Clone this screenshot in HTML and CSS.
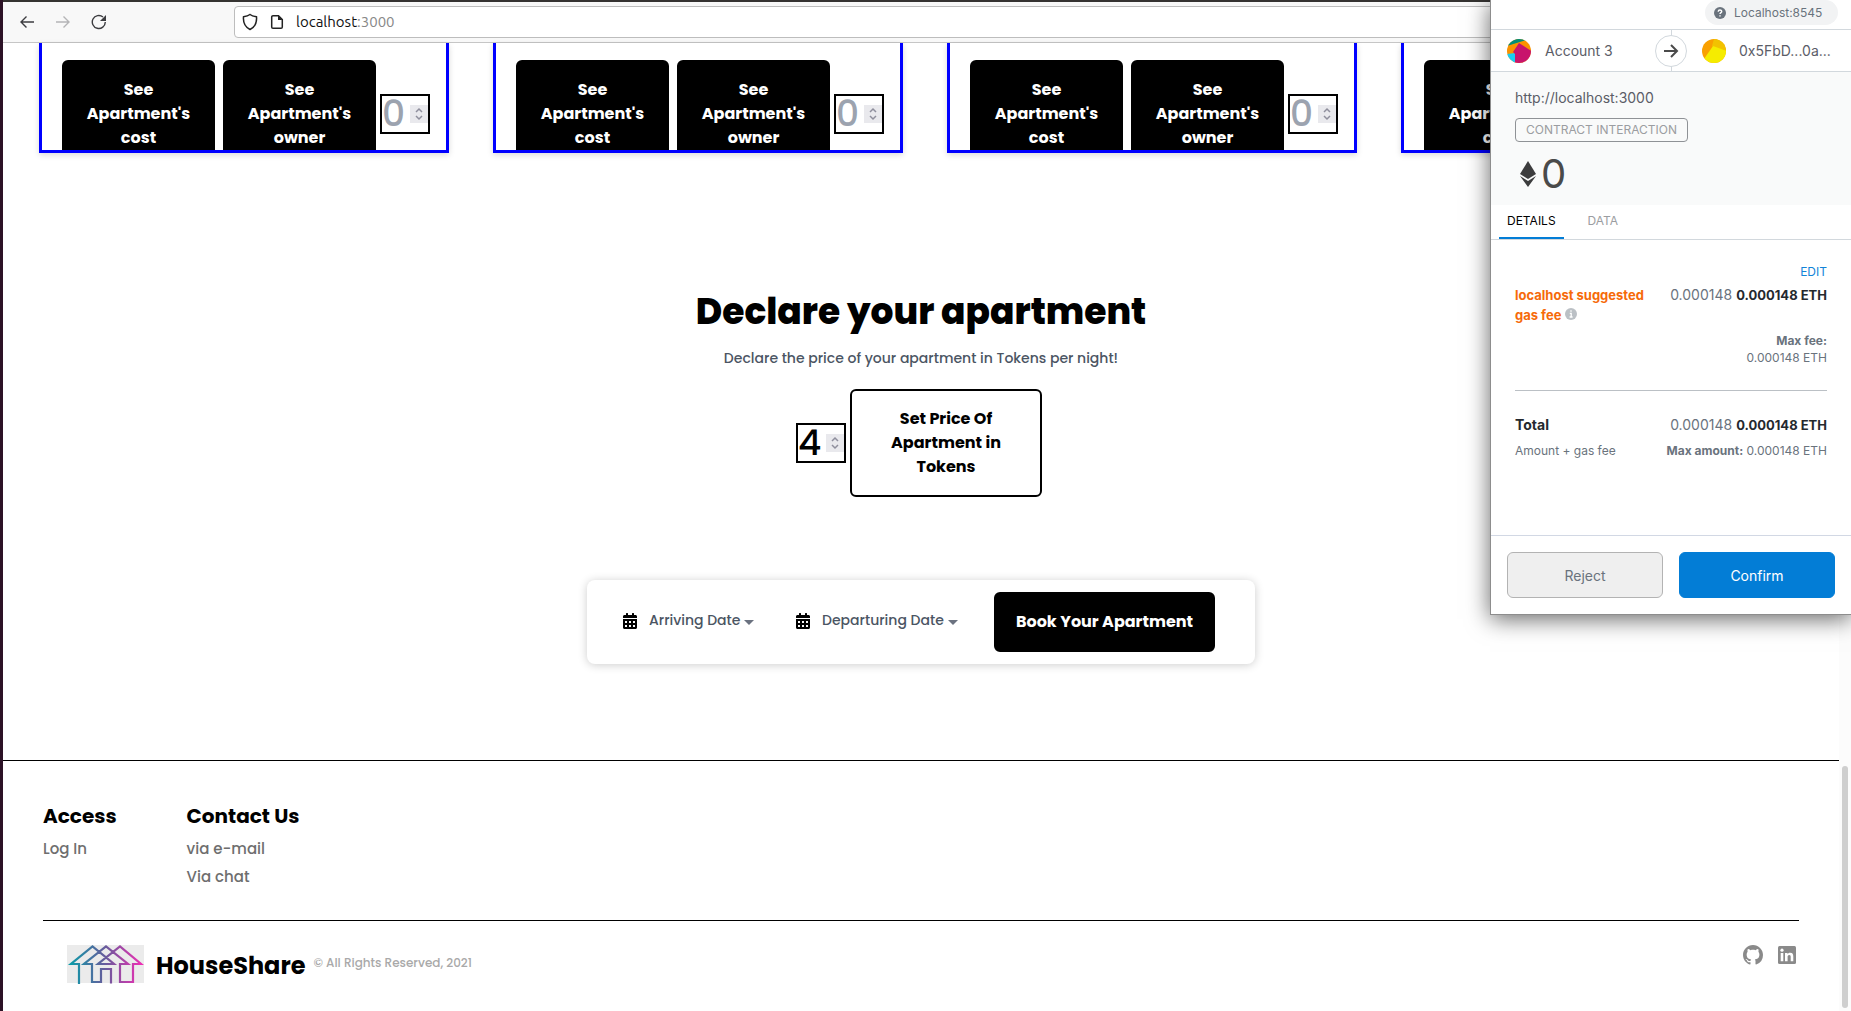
FILE: index.html
```html
<!DOCTYPE html>
<html lang="en">
<head>
<meta charset="utf-8">
<meta name="viewport" content="width=device-width, initial-scale=1">
<title>HouseShare</title>
<link rel="stylesheet" href="styles.css">
</head>
<body>
<svg class="defs" width="0" height="0" aria-hidden="true">
  <symbol id="spin" viewBox="0 0 18 18"><path d="M6 7l3-3 3 3M6 11l3 3 3-3" fill="none" stroke="#8f8f9d" stroke-width="1.5"/></symbol>
  <symbol id="calendar" viewBox="0 0 448 512"><path d="M0 464c0 26.500 21.500 48 48 48h352c26.500 0 48-21.500 48-48V192H0v272zm320-196c0-6.600 5.400-12 12-12h40c6.600 0 12 5.400 12 12v40c0 6.600-5.400 12-12 12h-40c-6.600 0-12-5.400-12-12v-40zm0 128c0-6.600 5.400-12 12-12h40c6.600 0 12 5.400 12 12v40c0 6.600-5.400 12-12 12h-40c-6.600 0-12-5.400-12-12v-40zM192 268c0-6.600 5.400-12 12-12h40c6.600 0 12 5.400 12 12v40c0 6.600-5.400 12-12 12h-40c-6.600 0-12-5.400-12-12v-40zm0 128c0-6.600 5.400-12 12-12h40c6.600 0 12 5.400 12 12v40c0 6.600-5.400 12-12 12h-40c-6.600 0-12-5.400-12-12v-40zM64 268c0-6.600 5.400-12 12-12h40c6.600 0 12 5.400 12 12v40c0 6.600-5.400 12-12 12H76c-6.600 0-12-5.400-12-12v-40zm0 128c0-6.600 5.400-12 12-12h40c6.600 0 12 5.400 12 12v40c0 6.600-5.400 12-12 12H76c-6.600 0-12-5.400-12-12v-40zM400 64h-48V16c0-8.800-7.200-16-16-16h-32c-8.800 0-16 7.200-16 16v48H160V16c0-8.800-7.200-16-16-16h-32c-8.800 0-16 7.200-16 16v48H48C21.500 64 0 85.500 0 112v48h448v-48c0-26.500-21.500-48-48-48z"/></symbol>
</svg>

<header class="toolbar">
  <div class="nav">
    <button class="nav-btn" aria-label="Back"><svg width="16" height="16" viewBox="0 0 16 16"><path d="M15 8H2M7.500 2.500L2 8l5.500 5.500" fill="none" stroke="#3c3c40" stroke-width="1.400"/></svg></button>
    <button class="nav-btn" aria-label="Forward" disabled><svg width="16" height="16" viewBox="0 0 16 16"><path d="M1 8h13M8.500 2.500L14 8l-5.500 5.500" fill="none" stroke="#b4b4b6" stroke-width="1.400"/></svg></button>
    <button class="nav-btn" aria-label="Reload"><svg width="16" height="16" viewBox="0 0 16 16"><path d="M14.300 8A6.500 6.500 0 1 1 12 3" fill="none" stroke="#3c3c40" stroke-width="1.400"/><path d="M15 1v6H9z" fill="#3c3c40"/></svg></button>
  </div>
  <div class="url">
    <svg width="16" height="18" viewBox="0 0 16 18"><path d="M8 1.500C10 3 12.500 3.500 14.500 3.800 15 9.500 13 14 8 16.500 3 14 1 9.500 1.500 3.800 3.500 3.500 6 3 8 1.500z" fill="none" stroke="#222" stroke-width="1.500"/></svg>
    <svg width="14" height="16" viewBox="0 0 14 16"><path d="M3 1.700h5.500L12.300 5.500V13a1.300 1.300 0 0 1-1.300 1.300H3A1.300 1.300 0 0 1 1.700 13V3A1.300 1.300 0 0 1 3 1.700z" fill="none" stroke="#222" stroke-width="1.500"/><path d="M8 1.500V6h4.500z" fill="#222"/></svg>
    <span class="address">localhost<span class="port">:3000</span></span>
  </div>
</header>

<main class="page">
  <section class="cards">
    <article class="card">
      <button class="btn btn-dark btn-card">See Apartment's cost</button>
      <button class="btn btn-dark btn-card">See Apartment's owner</button>
      <span class="number"><input type="number" placeholder="0" aria-label="Apartment 1"><svg class="spin"><use href="#spin"/></svg></span>
    </article>
    <article class="card">
      <button class="btn btn-dark btn-card">See Apartment's cost</button>
      <button class="btn btn-dark btn-card">See Apartment's owner</button>
      <span class="number"><input type="number" placeholder="0" aria-label="Apartment 2"><svg class="spin"><use href="#spin"/></svg></span>
    </article>
    <article class="card">
      <button class="btn btn-dark btn-card">See Apartment's cost</button>
      <button class="btn btn-dark btn-card">See Apartment's owner</button>
      <span class="number"><input type="number" placeholder="0" aria-label="Apartment 3"><svg class="spin"><use href="#spin"/></svg></span>
    </article>
    <article class="card">
      <button class="btn btn-dark btn-card">See Apartment's cost</button>
      <button class="btn btn-dark btn-card">See Apartment's owner</button>
      <span class="number"><input type="number" placeholder="0" aria-label="Apartment 4"><svg class="spin"><use href="#spin"/></svg></span>
    </article>
  </section>

  <section class="declare">
    <h1>Declare your apartment</h1>
    <p>Declare the price of your apartment in Tokens per night!</p>
    <div class="price">
      <span class="number"><input type="number" value="4" aria-label="Price in tokens"><svg class="spin"><use href="#spin"/></svg></span>
      <button class="btn btn-line">Set Price Of Apartment in Tokens</button>
    </div>
  </section>

  <section class="booking">
    <button class="date date-arrive"><svg width="14" height="16"><use href="#calendar"/></svg><span>Arriving Date</span><i class="caret"></i></button>
    <button class="date date-depart"><svg width="14" height="16"><use href="#calendar"/></svg><span>Departuring Date</span><i class="caret"></i></button>
    <button class="btn btn-dark btn-book">Book Your Apartment</button>
  </section>

  <footer class="footer">
    <div class="links">
      <div class="link-col">
        <h2>Access</h2>
        <a href="#">Log In</a>
      </div>
      <div class="link-col">
        <h2>Contact Us</h2>
        <a href="#">via e-mail</a>
        <a href="#">Via chat</a>
      </div>
    </div>
    <div class="legal">
      <svg class="logo" width="77" height="39" viewBox="0 0 77 39" aria-hidden="true">
        <defs><linearGradient id="roof" gradientUnits="userSpaceOnUse" x1="3" y1="0" x2="75" y2="0"><stop offset="0" stop-color="#0c9ba8"/><stop offset=".5" stop-color="#6a5a9c"/><stop offset="1" stop-color="#ee2fb4"/></linearGradient></defs>
        <rect width="77" height="38" fill="#ebebeb"/>
        <g fill="none" stroke="url(#roof)" stroke-width="2.200">
          <path d="M12 39V19H4L25.500 1.500 47 19H31L53 1.500 74 19H66V37H53V19H61L39 1.500 17 19H25V37H34V24H44V38.500"/>
        </g>
      </svg>
      <strong class="brand">HouseShare</strong>
      <small class="copy">© All Rights Reserved, 2021</small>
      <div class="social">
        <a href="#" aria-label="GitHub"><svg width="20" height="20" viewBox="0 0 16 16" fill="#8a8a8a"><path d="M8 0C3.580 0 0 3.580 0 8c0 3.540 2.290 6.530 5.470 7.590.4.070.55-.17.55-.38 0-.19-.01-.82-.01-1.490-2.010.37-2.530-.49-2.690-.94-.09-.23-.48-.94-.82-1.130-.28-.15-.68-.52-.01-.53.63-.01 1.080.58 1.230.82.72 1.210 1.870.87 2.330.66.07-.52.28-.87.51-1.070-1.780-.2-3.640-.89-3.640-3.950 0-.87.31-1.590.82-2.150-.08-.2-.36-1.020.08-2.120 0 0 .67-.21 2.200.82.64-.18 1.320-.27 2-.27s1.360.09 2 .27c1.530-1.040 2.200-.82 2.200-.82.44 1.100.16 1.920.08 2.120.51.56.82 1.270.82 2.150 0 3.070-1.870 3.750-3.650 3.950.29.25.54.73.54 1.480 0 1.070-.01 1.930-.01 2.200 0 .21.15.46.55.38A8.010 8.010 0 0 0 16 8c0-4.420-3.580-8-8-8z"/></svg></a>
        <a href="#" aria-label="LinkedIn"><svg width="18" height="18" viewBox="0 0 18 18"><rect width="18" height="18" rx="1.500" fill="#8a8a8a"/><g fill="#fff"><circle cx="4" cy="4.200" r="1.600"/><path d="M2.700 7h2.600v8.300H2.700zM7 7h2.500v1.200c.5-.8 1.400-1.400 2.700-1.400 2.500 0 3.100 1.600 3.100 3.900v4.600h-2.600v-4.200c0-1.100-.2-2-1.500-2s-1.600 1-1.600 2v4.200H7z"/></g></svg></a>
      </div>
    </div>
  </footer>
</main>
<div class="scrollbar"><div class="thumb"></div></div>

<aside class="wallet">
  <div class="network"><span class="pill"><svg width="12" height="12" viewBox="0 0 12 12"><circle cx="6" cy="6" r="6" fill="#6a737d"/><path d="M4.200 4.700C4.200 2.500 7.700 2.600 7.700 4.500 7.700 5.700 6 5.600 6 7M6 8.200v1.400" fill="none" stroke="#fff" stroke-width="1.400"/></svg>Localhost:8545</span></div>
  <div class="accounts">
    <div class="account">
      <svg width="24" height="24" viewBox="0 0 24 24"><clipPath id="c"><circle cx="12" cy="12" r="12"/></clipPath><g clip-path="url(#c)"><rect width="24" height="24" fill="#fa9300"/><path d="M0 0h24L16 2 0 7z" fill="#018e77"/><path d="M0 15l8-1v10H0z" fill="#18cdf2"/><path d="M12 4l14 9v14H8V15L6 13z" fill="#c8146c"/></g></svg>
      <span>Account 3</span>
    </div>
    <div class="arrow"><svg width="16" height="14" viewBox="0 0 16 14"><path d="M1 7h13M8 1l6 6-6 6" fill="none" stroke="#4a4a4a" stroke-width="2"/></svg></div>
    <div class="account account-to">
      <svg width="24" height="24" viewBox="0 0 24 24"><g clip-path="url(#c)"><rect width="24" height="24" fill="#f9a000"/><path d="M12 0h12v13L10 7z" fill="#f2c200"/><path d="M11 7l14 5v12H4l-2-4z" fill="#f5ec00"/></g></svg>
      <span>0x5FbD...0a...</span>
    </div>
  </div>
  <div class="summary">
    <span class="origin">http://localhost:3000</span>
    <span class="action">CONTRACT INTERACTION</span>
    <div class="amount"><svg width="16" height="26" viewBox="0 0 16 26"><path d="M8 0l8 13-8 5-8-5z" fill="#3c3c3d"/><path d="M0 15l8 5 8-5-8 11z" fill="#3c3c3d"/></svg><span>0</span></div>
  </div>
  <div class="tabs" role="tablist"><button class="tab tab-on" role="tab" aria-selected="true">DETAILS</button><button class="tab" role="tab" aria-selected="false">DATA</button></div>
  <div class="fees">
    <a class="edit" href="#">EDIT</a>
    <div class="fee">
      <span class="gas">localhost suggested<br>gas fee <svg width="12" height="12" viewBox="0 0 12 12"><circle cx="6" cy="6" r="6" fill="#bbc0c5"/><path d="M6 2.300v1.500M4.800 5.300H6.200V9M4.600 9h3" fill="none" stroke="#fff" stroke-width="1.300"/></svg></span>
      <span class="value">0.000148 <b>0.000148 ETH</b></span>
    </div>
    <div class="max"><b>Max fee:</b><br>0.000148 ETH</div>
    <div class="fee total"><b class="sum">Total</b><span class="value">0.000148 <b>0.000148 ETH</b></span></div>
    <div class="fee note"><span>Amount + gas fee</span><span><b>Max amount:</b> 0.000148 ETH</span></div>
  </div>
  <div class="actions"><button class="act reject">Reject</button><button class="act confirm">Confirm</button></div>
</aside>
</body>
</html>
```

FILE: styles.css
```css
* { box-sizing: border-box; }
body {
  margin: 0;
  min-height: 100vh;
  display: grid;
  grid-template: auto 1fr / 1fr 12px;
  border-left: 3px solid #2c1226;
  background: #fff;
  color: #000;
  font-family: Poppins, Inter, "Liberation Sans", sans-serif;
  overflow: hidden;
}
button, input { font: inherit; margin: 0; }
button { cursor: pointer; }
a { text-decoration: none; }
h1, h2, p { margin: 0; }
svg { flex: none; }
.defs { position: absolute; }

.toolbar {
  grid-column: 1 / 3;
  display: flex;
  align-items: center;
  height: 43px;
  padding: 1px 0 1px 16px;
  border-top: 2px solid #353331;
  border-bottom: 1px solid #c6c6c6;
  background: #f8f8f8;
}
.nav { display: flex; gap: 20px; width: 215px; }
.nav-btn { display: flex; padding: 0; border: 0; background: none; }
.url {
  flex: 1;
  display: flex;
  align-items: center;
  gap: 12px;
  height: 32px;
  padding-left: 7px;
  border: 1px solid #bdbdbd;
  border-radius: 4px;
  background: #fff;
}
.address { font: 15px/20px Ubuntu, "Noto Sans", sans-serif; color: #111; }
.port { color: #888; }

.cards {
  display: grid;
  grid-template-columns: repeat(4, 1fr);
  gap: 44px;
  padding: 0 28px 0 36px;
}
.card {
  display: flex;
  align-items: flex-start;
  height: 110px;
  padding: 17px 0 0 20px;
  border: 3px solid #00f;
  border-top: 0;
  box-shadow: 0 2px 6px rgba(0, 0, 0, .15);
  overflow: hidden;
}
.card .number { margin: 34px 0 0 4px; }
.btn {
  border: 2px solid #000;
  border-radius: 6px;
  font-size: 16px;
  font-weight: 700;
  line-height: 24px;
  text-align: center;
}
.btn-dark { background: #000; color: #fff; }
.btn-card { width: 153px; padding: 16px 20px; flex: none; }
.btn-card + .btn-card { margin-left: 8px; }
.number {
  display: flex;
  align-items: center;
  width: 50px;
  height: 40px;
  border: 2px solid #000;
}
.number input {
  width: 28px;
  height: 36px;
  padding: 0 0 2px;
  border: 0;
  outline: 0;
  background: none;
  font-size: 36px;
  font-weight: 500;
  line-height: 34px;
  appearance: textfield;
}
.number input::-webkit-inner-spin-button { appearance: none; margin: 0; }
.number input::placeholder { color: #9ca3af; opacity: 1; }
.spin { width: 18px; height: 18px; background: #e9e9ed; }

.declare { padding-top: 139px; text-align: center; }
.declare h1 { font-size: 36px; font-weight: 800; line-height: 40px; }
.declare p { margin: 14px 0 19px; font-size: 14px; font-weight: 500; line-height: 24px; color: #4b5563; }
.price { display: flex; align-items: center; justify-content: center; gap: 4px; padding-right: 4px; }
.btn-line { width: 192px; padding: 16px 32px; background: #fff; color: #000; }

.booking {
  display: flex;
  align-items: center;
  width: 668px;
  margin: 83px auto 96px;
  padding: 12px 40px 12px 36px;
  border-radius: 8px;
  box-shadow: 0 1px 10px rgba(0, 0, 0, .2);
}
.date {
  display: flex;
  align-items: center;
  padding: 0 0 4px;
  border: 0;
  background: none;
  font-size: 14px;
  font-weight: 500;
  line-height: 24px;
  color: #4b5563;
}
.date svg { margin: 2px 12px 0 0; fill: #000; }
.date-arrive { width: 173px; }
.date-depart { flex: 1; }
.caret { margin: 4px 0 0 4px; border: 5px solid transparent; border-top-color: #6b7280; border-bottom: 0; }
.btn-book { width: 221px; height: 60px; padding: 0; }

.footer { border-top: 1px solid #000; padding: 39px 40px 20px; }
.links { display: flex; gap: 70px; padding-bottom: 29px; border-bottom: 1px solid #000; }
.link-col { display: flex; flex-direction: column; font-size: 15px; font-weight: 500; line-height: 28px; }
.link-col h2 { margin-bottom: 3px; font-size: 20px; line-height: 32px; }
.link-col a { color: #6e6e6e; }
.legal { display: flex; align-items: flex-start; padding: 24px 3px 0 24px; }
.brand { margin-left: 12px; font-size: 24px; line-height: 42px; }
.copy { margin-left: 8px; font-size: 12px; font-weight: 500; line-height: 36px; color: #a9a9a9; }
.social { display: flex; align-items: center; gap: 15px; margin-left: auto; }
.social a { display: flex; }

.scrollbar { display: flex; flex-direction: column; justify-content: flex-end; padding: 3px; background: #fcfcfc; }
.thumb { height: 242px; border-radius: 3px; background: #cfcfcf; }

.wallet {
  position: absolute;
  top: 0;
  right: 0;
  width: 361px;
  border: solid #8d8d8d;
  border-width: 0 0 1px 1px;
  background: #fff;
  box-shadow: 0 4px 22px rgba(0, 0, 0, .6);
  font-family: "Euclid Circular B", Inter, sans-serif;
  font-size: 14px;
}
.network { display: flex; justify-content: flex-end; padding: 0 13px 4px; border-bottom: 1px solid #d2d8dd; }
.pill {
  display: flex;
  align-items: center;
  gap: 8px;
  width: 133px;
  height: 25px;
  padding-left: 9px;
  border-radius: 13px;
  background: #f2f3f4;
  font-size: 12px;
  color: #6a737d;
}
.accounts {
  display: flex;
  align-items: center;
  height: 42px;
  border-bottom: 1px solid #d2d8dd;
  background: linear-gradient(#d2d8dd, #d2d8dd) 180px 0 / 1px 100% no-repeat;
  color: #5b5d67;
}
.account { display: flex; align-items: center; gap: 14px; width: 164px; padding-left: 16px; }
.account-to { width: auto; padding-left: 15px; gap: 13px; }
.arrow {
  display: flex;
  align-items: center;
  justify-content: center;
  width: 32px;
  height: 32px;
  border: 1px solid #d2d8dd;
  border-radius: 50%;
  background: #fff;
}
.summary {
  display: flex;
  flex-direction: column;
  align-items: flex-start;
  padding: 16px 24px 7px;
  background: #f9fafa;
}
.origin { line-height: 20px; color: #5b5d67; }
.action {
  margin: 10px 0 8px;
  padding: 0 10px;
  border: 1px solid #8f9296;
  border-radius: 4px;
  font-size: 12px;
  line-height: 22px;
  color: #9b9da1;
}
.amount { display: flex; align-items: center; gap: 5px; padding-left: 5px; font-size: 40px; line-height: 48px; color: #4a4a4a; }
.tabs { display: flex; gap: 8px; padding-left: 8px; border-bottom: 1px solid #d2d8dd; }
.tab { padding: 0 8px; border: 0; border-bottom: 2px solid transparent; background: none; font-size: 12px; line-height: 32px; color: #9b9da1; }
.tab-on { border-color: #037dd6; color: #000; }
.tab + .tab { margin-left: 8px; }
.fees { padding: 22px 24px 74px; color: #6a737d; }
.edit { display: block; text-align: right; font-size: 12px; line-height: 20px; color: #1283d8; }
.fee { display: flex; justify-content: space-between; line-height: 20px; }
.fee b { color: #24292e; }
.fee .gas { margin-top: 3px; font-size: 13px; font-weight: 700; color: #f66a0a; }
.fee .value { margin-top: 3px; }
.value b { font-size: 13px; }
.max { margin-top: 7px; padding-bottom: 24px; border-bottom: 1px solid #bbc0c5; text-align: right; font-size: 12px; line-height: 17px; }
.total { align-items: baseline; margin-top: 21px; }
.note { margin-top: 6px; font-size: 12px; }
.fee.note b { color: #6a737d; }
.actions { display: flex; gap: 16px; padding: 16px; border-top: 1px solid #d2d8e4; }
.act { flex: 1; height: 46px; border: 1px solid #b3b3b3; border-radius: 6px; background: #efefef; color: #6a737d; }
.confirm { border-color: #037dd6; background: #037dd6; color: #fff; }
```
